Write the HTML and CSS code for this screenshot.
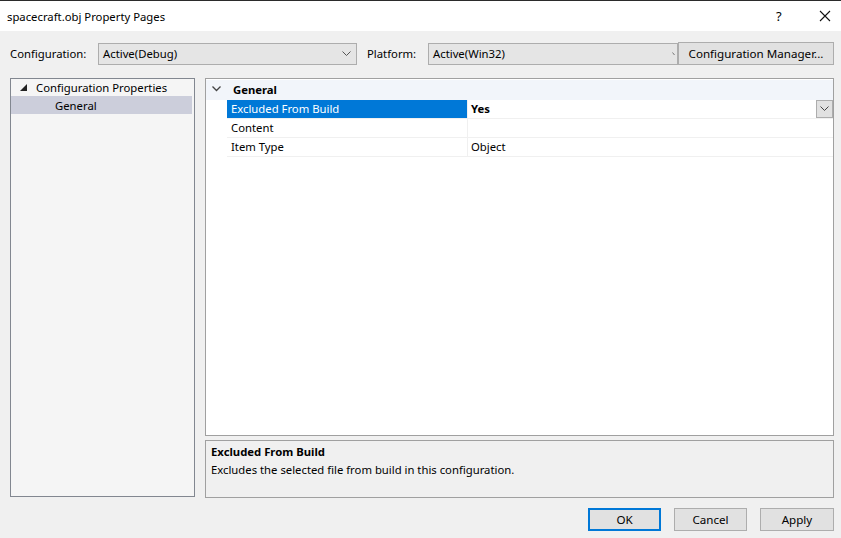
FILE: index.html
```html
<!DOCTYPE html>
<html lang="en">
<head>
  <meta charset="UTF-8">
  <title>spacecraft.obj Property Pages</title>
  <link rel="stylesheet" href="styles.css">
</head>
<body>

  <!-- Title bar -->
  <div class="titlebar">
    <span class="title">spacecraft.obj Property Pages</span>
    <span class="help">?</span>
    <span class="close">
      <svg width="12" height="12" viewBox="0 0 12 12"><path d="M1 1 L11 11 M11 1 L1 11" stroke="#111" stroke-width="1.1" fill="none"/></svg>
    </span>
  </div>

  <!-- Configuration row -->
  <div class="config-row">
    <span class="label config-label">Configuration:</span>
    <div class="combo combo-config">
      <span>Active(Debug)</span>
      <svg width="9" height="6" viewBox="0 0 9 6"><path d="M0.5 0.5 L4.5 4.5 L8.5 0.5" stroke="#555" fill="none"/></svg>
    </div>
    <span class="label platform-label">Platform:</span>
    <div class="combo combo-platform">
      <span>Active(Win32)</span>
      <svg width="3" height="4" viewBox="0 0 3 4"><path d="M0.5 0.5 L2.5 3" stroke="#777" fill="none"/></svg>
    </div>
    <button class="btn btn-manager">Configuration Manager...</button>
  </div>

  <!-- Main area -->
  <div class="content">
    <div class="tree">
      <div class="tree-row top">
        <svg class="tree-arrow" width="7" height="7" viewBox="0 0 7 7"><polygon points="7,0 7,7 0,7" fill="#222"/></svg>
        <span>Configuration Properties</span>
      </div>
      <div class="tree-row child selected">General</div>
    </div>

    <div class="right">
      <div class="grid">
        <div class="grid-header">
          <svg class="chev" width="9" height="6" viewBox="0 0 9 6"><path d="M0.5 0.5 L4.5 4.5 L8.5 0.5" stroke="#444" stroke-width="1.3" fill="none"/></svg>
          <span>General</span>
        </div>
        <div class="grid-row active">
          <div class="name">Excluded From Build</div>
          <div class="value"><b>Yes</b>
            <span class="drop">
              <svg width="9" height="6" viewBox="0 0 9 6"><path d="M0.5 0.5 L4.5 4.5 L8.5 0.5" stroke="#444" fill="none"/></svg>
            </span>
          </div>
        </div>
        <div class="grid-row">
          <div class="name">Content</div>
          <div class="value"></div>
        </div>
        <div class="grid-row">
          <div class="name">Item Type</div>
          <div class="value">Object</div>
        </div>
      </div>

      <div class="desc">
        <div class="desc-title">Excluded From Build</div>
        <div class="desc-text">Excludes the selected file from build in this configuration.</div>
      </div>
    </div>
  </div>

  <!-- Dialog buttons -->
  <div class="buttons">
    <button class="btn btn-ok">OK</button>
    <button class="btn">Cancel</button>
    <button class="btn btn-apply">Apply</button>
  </div>

</body>
</html>
```

FILE: styles.css
```css
/* Dialog */
body {
  margin: 0;
  width: 841px;
  height: 538px;
  overflow: hidden;
  background-color: #f0f0f0;
  font-family: "Segoe UI", "Noto Sans", sans-serif;
  font-size: 11.3px;
  color: #000;
}

/* Title bar */
.titlebar {
  height: 31px;
  background: #fff;
  border-top: 1px solid #2b2b2b;
  box-sizing: border-box;
  display: flex;
  align-items: center;
  padding-left: 7px;
}

.title {
  flex: 1;
}

.help {
  width: 14px;
  margin-right: 29px;
  font-size: 13px;
}

.close {
  width: 22px;
  display: flex;
}

/* Konfiguration */
.config-row {
  display: flex;
  align-items: center;
  margin-top: 11px;
  padding-left: 10px;
  height: 23px;
}

.label {
  white-space: nowrap;
}

.config-label {
  width: 88px;
}

.platform-label {
  width: 61px;
  margin-left: 10px;
}

.combo {
  height: 22px;
  box-sizing: border-box;
  border: 1px solid #adadad;
  background: #e5e5e5;
  display: flex;
  align-items: center;
  justify-content: space-between;
  padding: 0 5px 0 4px;
}

.combo-config {
  width: 259px;
}

.combo-platform {
  width: 250px;
  padding-right: 2px;
}

.btn {
  font-family: inherit;
  font-size: 11.6px;
  color: #000;
  height: 23px;
  background: #e1e1e1;
  border: 1px solid #adadad;
  padding: 0;
  width: 73px;
}

.btn-manager {
  width: 156px;
  margin-top: -1px;
}

/* Hauptbereich */
.content {
  display: flex;
  padding-left: 10px;
  margin-top: 13px;
  height: 420px;
}

.tree {
  width: 185px;
  height: 419px;
  box-sizing: border-box;
  border: 1px solid #828790;
  background: #f5f5f5;
}

.tree-row {
  height: 18px;
  display: flex;
  align-items: center;
  padding-left: 9px;
}

.tree-row.top {
  height: 17px;
}

.tree-arrow {
  margin-right: 9px;
}

.tree-row.child {
  padding-left: 44px;
  margin-right: 2px;
}

.tree-row.selected {
  background: #cccedb;
}

.right {
  margin-left: 10px;
  width: 629px;
  display: flex;
  flex-direction: column;
  gap: 4px;
}

/* Eigenschaften */
.grid {
  height: 358px;
  box-sizing: border-box;
  border: 1px solid #a0a0a0;
  background: #fff;
  padding-top: 1px;
}

.grid-header {
  height: 20px;
  display: flex;
  align-items: center;
  background: #f2f5fa;
  font-weight: bold;
  padding-bottom: 2px;
  box-sizing: border-box;
}

.chev {
  margin: 0 12px 0 6px;
}

.grid-row {
  height: 19px;
  box-sizing: border-box;
  display: flex;
  margin-left: 21px;
  border-bottom: 1px solid #f0f0f0;
}

.name {
  width: 241px;
  padding-left: 4px;
  padding-bottom: 1px;
  box-sizing: border-box;
  display: flex;
  align-items: center;
  border-right: 1px solid #f0f0f0;
}

.value {
  flex: 1;
  display: flex;
  align-items: center;
  padding-left: 3px;
  padding-bottom: 1px;
  position: relative;
}

.grid-row.active .name {
  background: #0078d7;
  color: #fff;
}

.drop {
  position: absolute;
  right: 0;
  top: 0;
  width: 17px;
  height: 18px;
  box-sizing: border-box;
  background: #e1e1e1;
  border: 1px solid #adadad;
  display: flex;
  align-items: center;
  justify-content: center;
}

/* Beschreibung */
.desc {
  height: 58px;
  box-sizing: border-box;
  border: 1px solid #a0a0a0;
  background: #f0f0f0;
  padding: 2px 5px;
}

.desc-title {
  font-weight: bold;
  line-height: 18px;
}

.desc-text {
  line-height: 18px;
}

/* Buttons */
.buttons {
  display: flex;
  justify-content: flex-end;
  gap: 13px;
  padding-right: 7px;
  margin-top: 10px;
}

.btn-ok {
  border: 2px solid #0078d7;
}

.btn-apply {
  width: 74px;
}
```
